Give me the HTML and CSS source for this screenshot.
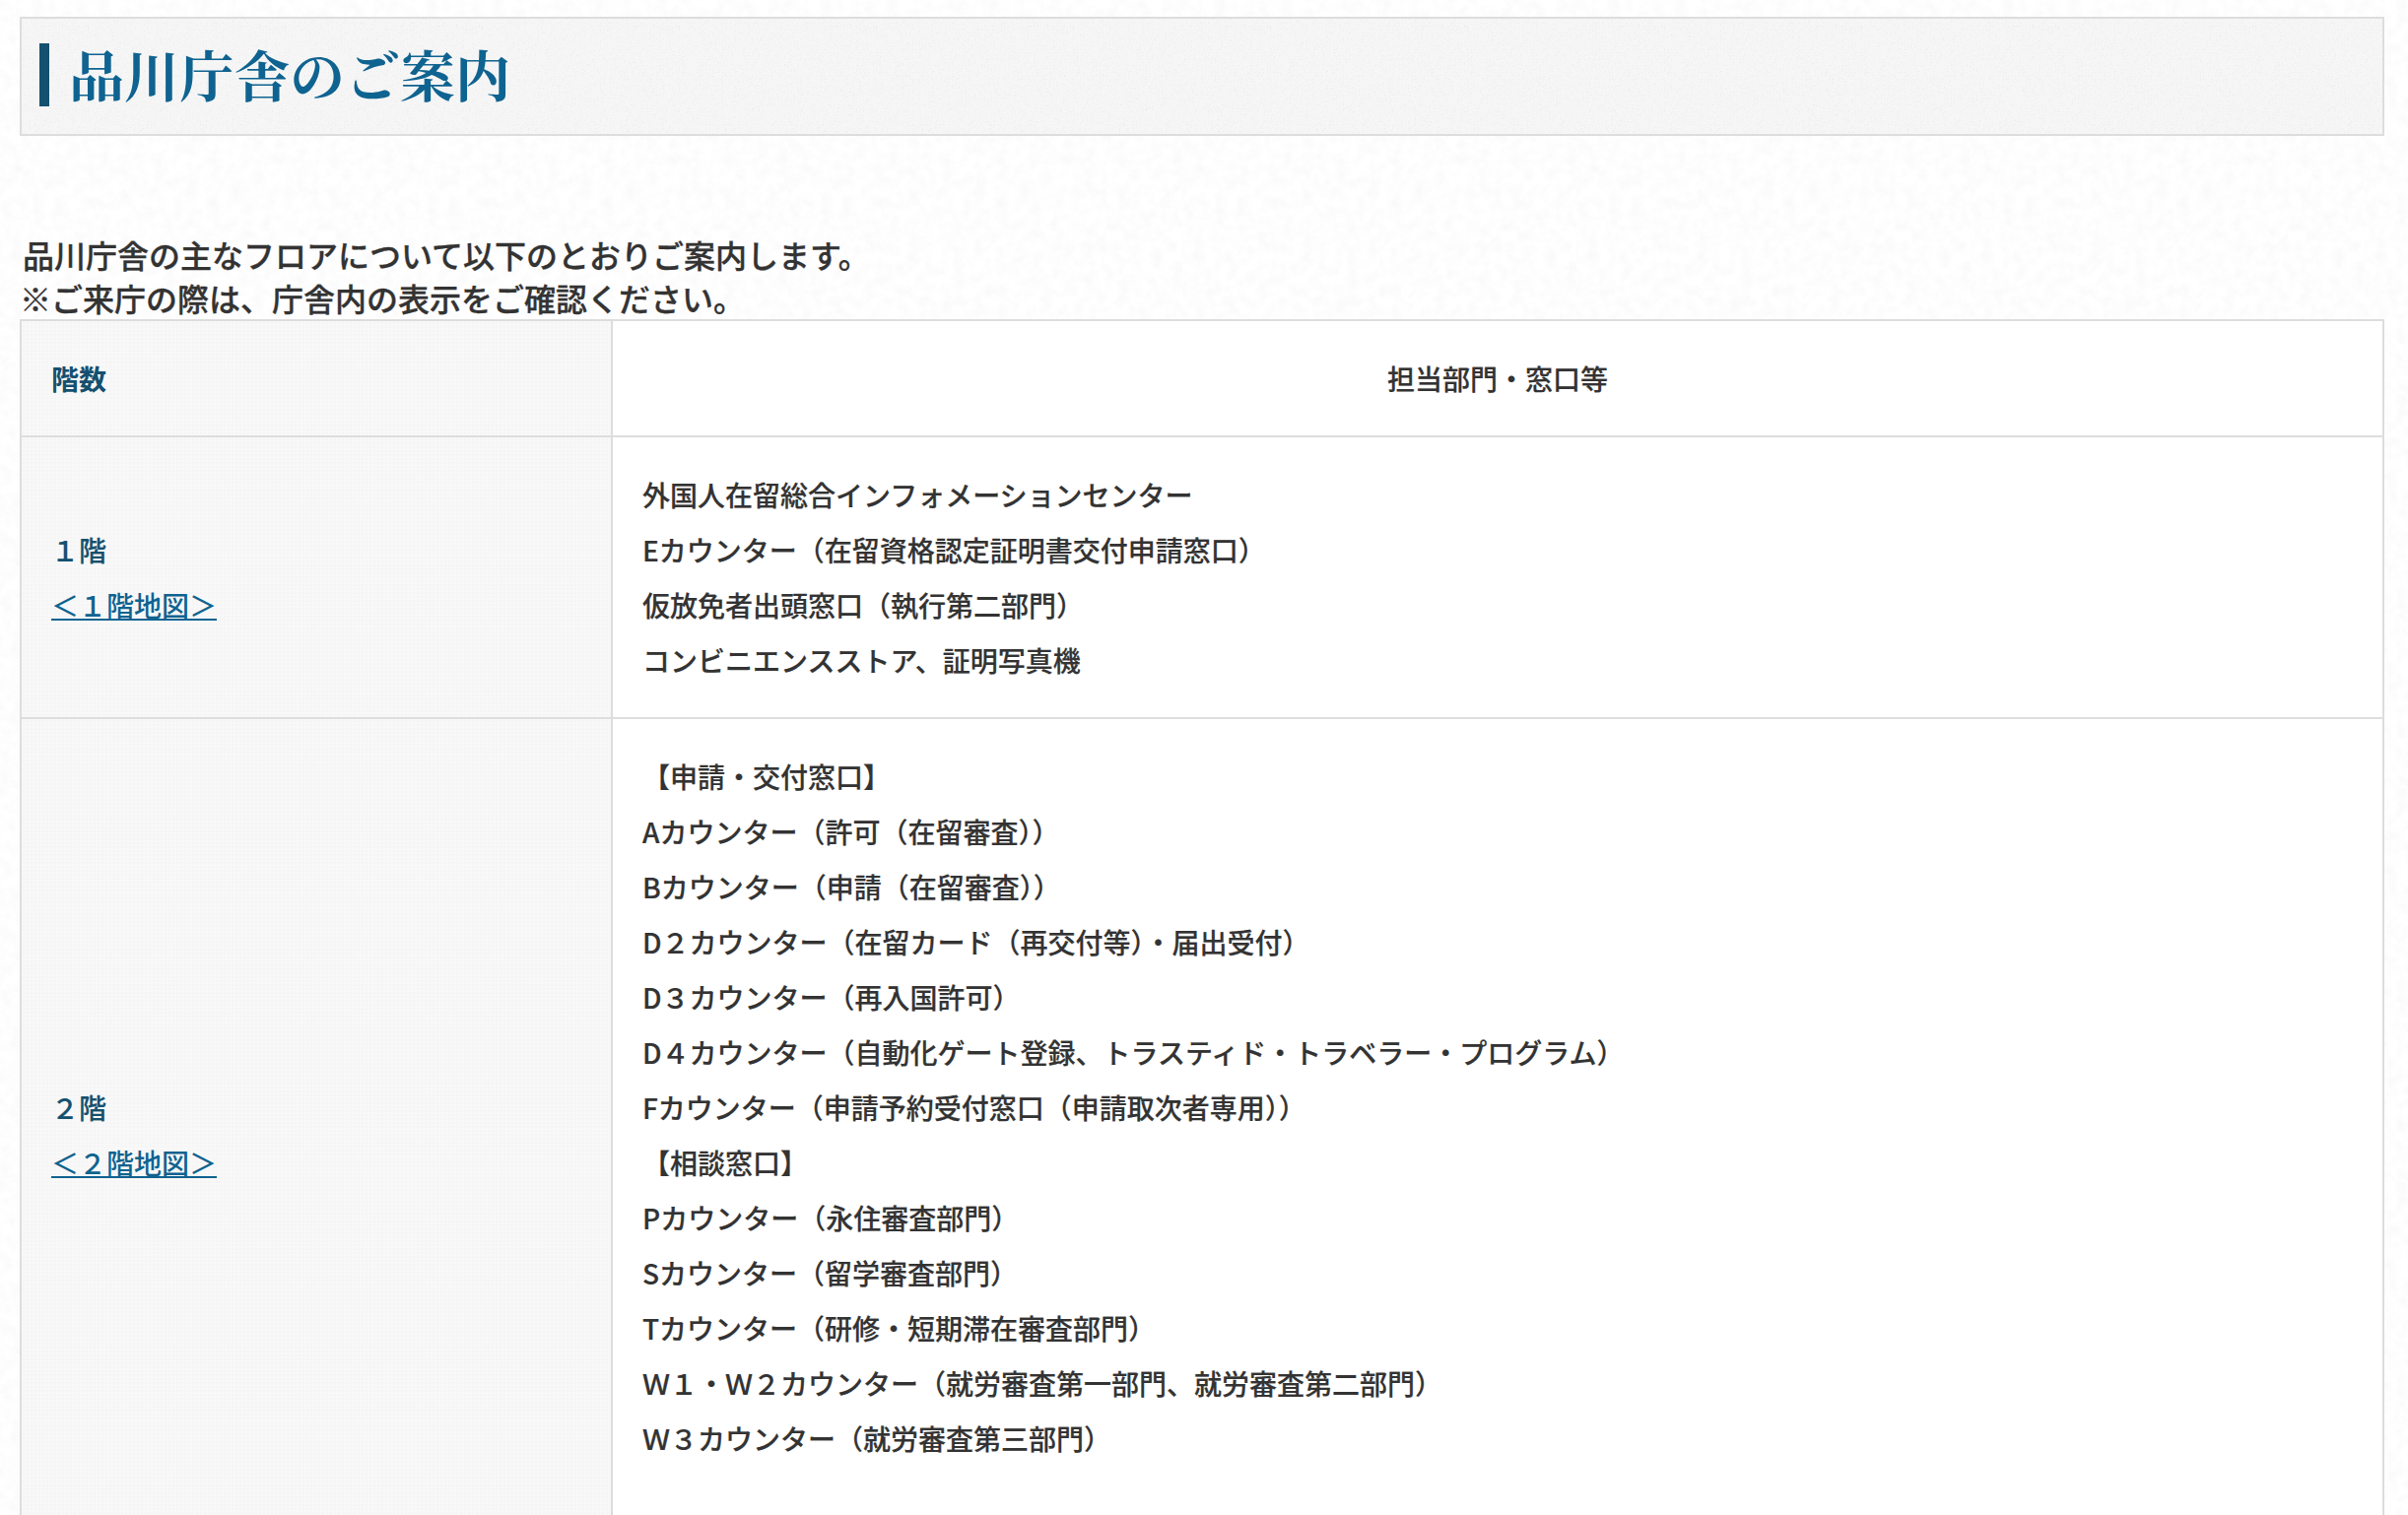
FILE: index.html
```html
<!DOCTYPE html>
<html lang="ja">
<head>
<meta charset="utf-8">
<title>品川庁舎のご案内</title>
<link rel="stylesheet" href="styles.css">
</head>
<body>
<main class="page">
  <header class="title-box">
    <h1 class="title">品川庁舎のご案内</h1>
  </header>
  <p class="intro">品川庁舎の主なフロアについて以下のとおりご案内します。<br><span class="note">※ご来庁の際は、庁舎内の表示をご確認ください。</span></p>
  <table class="floors">
    <colgroup><col class="col-floor"><col></colgroup>
    <thead>
      <tr><th class="floor-head">階数</th><th class="dept-head">担当部門・窓口等</th></tr>
    </thead>
    <tbody>
      <tr>
        <th class="floor">１階<br><a href="#">＜１階地図＞</a></th>
        <td class="dept">外国人在留総合インフォメーションセンター<br>Eカウンター（在留資格認定証明書交付申請窓口）<br>仮放免者出頭窓口（執行第二部門）<br>コンビニエンスストア、証明写真機</td>
      </tr>
      <tr>
        <th class="floor">２階<br><a href="#">＜２階地図＞</a></th>
        <td class="dept">【申請・交付窓口】<br>Aカウンター（許可（在留審査））<br>Bカウンター（申請（在留審査））<br>D２カウンター（在留カード（再交付等）・届出受付）<br>D３カウンター（再入国許可）<br>D４カウンター（自動化ゲート登録、トラスティド・トラベラー・プログラム）<br>Fカウンター（申請予約受付窓口（申請取次者専用））<br>【相談窓口】<br>Pカウンター（永住審査部門）<br>Sカウンター（留学審査部門）<br>Tカウンター（研修・短期滞在審査部門）<br>Ｗ１・Ｗ２カウンター（就労審査第一部門、就労審査第二部門）<br>Ｗ３カウンター（就労審査第三部門）<br>&nbsp;</td>
      </tr>
    </tbody>
  </table>
</main>
</body>
</html>
```
FILE: styles.css
```css
* { box-sizing: border-box; }
html, body { margin: 0; height: 1538px; overflow: hidden; }
body {
  background-color: #fff;
  background-image: url("data:image/svg+xml,%3Csvg xmlns='http://www.w3.org/2000/svg' width='400' height='400'%3E%3Cfilter id='n'%3E%3CfeTurbulence type='fractalNoise' baseFrequency='.09' numOctaves='3' seed='4' stitchTiles='stitch'/%3E%3CfeColorMatrix values='0 0 0 0 .6 0 0 0 0 .6 0 0 0 0 .6 .2 0 0 0 -.07'/%3E%3C/filter%3E%3Crect width='400' height='400' filter='url(%23n)'/%3E%3C/svg%3E");
  color: #333;
  font-family: "Noto Sans CJK JP", "Noto Sans", sans-serif;
}
.page { padding: 17px 24px 0 20px; }
.title-box {
  height: 121px;
  padding: 25px 0 0 18px;
  border: 2px solid #ddd;
  background-color: #f6f6f6;
  background-image: url("data:image/svg+xml,%3Csvg xmlns='http://www.w3.org/2000/svg' width='200' height='200'%3E%3Cfilter id='s'%3E%3CfeTurbulence type='turbulence' baseFrequency='.7' numOctaves='1' seed='7' stitchTiles='stitch'/%3E%3CfeColorMatrix values='0 0 0 0 .84 0 0 0 0 .84 0 0 0 0 .84 3 0 0 0 -.6'/%3E%3C/filter%3E%3Crect width='200' height='200' filter='url(%23s)'/%3E%3C/svg%3E");
}
.title {
  margin: 0;
  padding-left: 20px;
  height: 64px;
  border-left: 10px solid #14506f;
  color: #0f6390;
  font-family: "Noto Serif CJK JP", "Noto Sans CJK JP", serif;
  font-size: 56px;
  font-weight: 700;
  line-height: 60px;
}
.intro {
  margin: 98px 0 0;
  padding-left: 3px;
  font-size: 32px;
  font-weight: 500;
  line-height: 44px;
  -webkit-text-stroke: .3px #333;
}
.note { margin-left: -3px; }
.floors {
  width: 100%;
  border-collapse: collapse;
  table-layout: fixed;
  background: #fff;
  font-size: 28px;
  font-weight: 500;
  line-height: 56px;
  -webkit-text-stroke: .2px currentColor;
}
.col-floor { width: 600px; }
.floors th, .floors td {
  padding: 30px;
  border: 2px solid #ddd;
  vertical-align: middle;
}
.floor-head, .floor {
  background-color: #f8f8f8;
  background-image: radial-gradient(circle, #f4f4f4 .7px, transparent 1px);
  background-size: 4px 4px;
  color: #14506f;
  text-align: left;
  font-weight: 500;
}
.floor-head { font-weight: 700; -webkit-text-stroke: 0; }
.dept-head { text-align: center; font-weight: 500; }
.dept { text-align: left; }
.floor a { color: #0f6390; font-weight: 500; -webkit-text-stroke: 0; }
```
